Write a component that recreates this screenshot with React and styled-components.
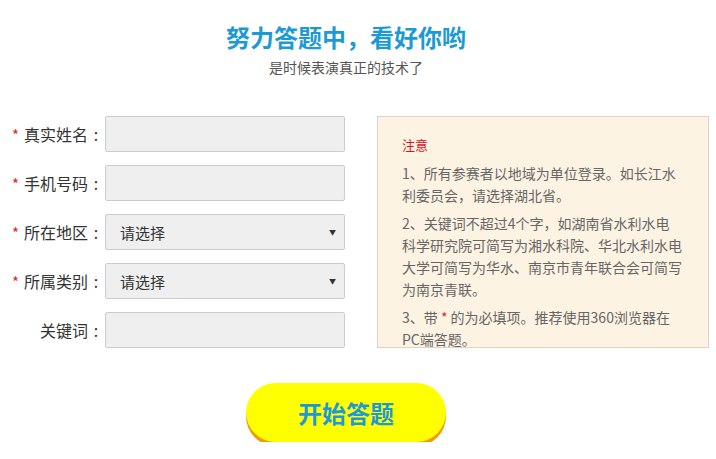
import React from "react";
import styled, { createGlobalStyle } from "styled-components";

const GlobalStyle = createGlobalStyle`
  body {
    margin: 0;
    background: #fff;
    font-family: "Noto Sans CJK SC", "Microsoft YaHei", sans-serif;
  }
`;

const Page = styled.div`
  width: 716px;
  padding-top: 22px;
`;

const Header = styled.div`
  width: 692px;
  text-align: center;
`;

const Title = styled.h1`
  margin: 0;
  font-size: 24px;
  line-height: 30px;
  font-weight: 700;
  color: #1c9ad6;
`;

const Subtitle = styled.p`
  margin: 6px 0 0;
  font-size: 14px;
  line-height: 18px;
  color: #555;
`;

const Main = styled.div`
  display: flex;
  align-items: flex-start;
  margin-top: 40px;
`;

const Form = styled.div`
  display: flex;
  flex-direction: column;
  gap: 13px;
  width: 377px;
  flex-shrink: 0;
`;

const Row = styled.div`
  display: flex;
  align-items: center;
`;

const Label = styled.label`
  width: 105px;
  padding-right: 1px;
  box-sizing: border-box;
  display: flex;
  justify-content: flex-end;
  align-items: center;
  font-size: 16px;
  color: #333;
  white-space: nowrap;
`;

const Star = styled.span`
  color: #e0262e;
  font-size: 15px;
  margin-right: 5px;
`;

const Colon = styled.span`
  width: 16px;
  text-align: center;
`;

const Field = styled.input`
  width: 240px;
  height: 36px;
  box-sizing: border-box;
  border: 1px solid #cccccc;
  border-radius: 2px;
  background: #efefef;
  outline: none;
`;

const SelectWrap = styled.div`
  position: relative;
  width: 240px;
  height: 36px;
`;

const Select = styled.select`
  appearance: none;
  width: 100%;
  height: 100%;
  box-sizing: border-box;
  border: 1px solid #cccccc;
  border-radius: 2px;
  background: #efefef;
  padding-left: 14px;
  font-family: inherit;
  font-size: 15px;
  color: #333;
  outline: none;
`;

const Arrow = styled.span`
  position: absolute;
  right: 9px;
  top: 13px;
  font-size: 7px;
  color: #333;
  pointer-events: none;
`;

const Notice = styled.div`
  width: 332px;
  height: 232px;
  flex-shrink: 0;
  box-sizing: border-box;
  overflow: hidden;
  background: #fdf3e3;
  border: 1px solid #dcd4c8;
  padding: 17px 0 0 24px;
`;

const Para = styled.p`
  margin: 0 0 6px;
  font-size: ${(p) => (p.$head ? "13px" : "14px")};
  line-height: 22px;
  color: ${(p) => (p.$head ? "#d8141e" : "#666")};
  white-space: nowrap;
`;

const Red = styled.span`
  color: #e0262e;
`;

const Footer = styled.div`
  width: 692px;
  display: flex;
  justify-content: center;
  margin-top: 35px;
`;

const StartButton = styled.button`
  width: 200px;
  height: 59px;
  border: none;
  border-radius: 30px;
  background: #ffff00;
  box-shadow: 0 4px 0 #f39a00;
  font-family: inherit;
  font-size: 24px;
  font-weight: 700;
  color: #1c9ad6;
  cursor: pointer;
`;

const fields = [
  { label: "真实姓名", required: true },
  { label: "手机号码", required: true },
  { label: "所在地区", required: true, select: true },
  { label: "所属类别", required: true, select: true },
  { label: "关键词", required: false },
];

export default function App() {
  return (
    <Page>
      <GlobalStyle />
      <Header>
        <Title>努力答题中，看好你哟</Title>
        <Subtitle>是时候表演真正的技术了</Subtitle>
      </Header>
      <Main>
        <Form>
          {fields.map((f) => (
            <Row key={f.label}>
              <Label>
                {f.required && <Star>*</Star>}
                {f.label}
                <Colon>:</Colon>
              </Label>
              {f.select ? (
                <SelectWrap>
                  <Select>
                    <option>请选择</option>
                  </Select>
                  <Arrow>▼</Arrow>
                </SelectWrap>
              ) : (
                <Field type="text" />
              )}
            </Row>
          ))}
        </Form>
        <Notice>
          <Para $head>注意</Para>
          <Para>
            1、所有参赛者以地域为单位登录。如长江水
            <br />
            利委员会，请选择湖北省。
          </Para>
          <Para>
            2、关键词不超过4个字，如湖南省水利水电
            <br />
            科学研究院可简写为湘水科院、华北水利水电
            <br />
            大学可简写为华水、南京市青年联合会可简写
            <br />
            为南京青联。
          </Para>
          <Para>
            3、带 <Red>*</Red> 的为必填项。推荐使用360浏览器在
            <br />
            PC端答题。
          </Para>
        </Notice>
      </Main>
      <Footer>
        <StartButton>开始答题</StartButton>
      </Footer>
    </Page>
  );
}
